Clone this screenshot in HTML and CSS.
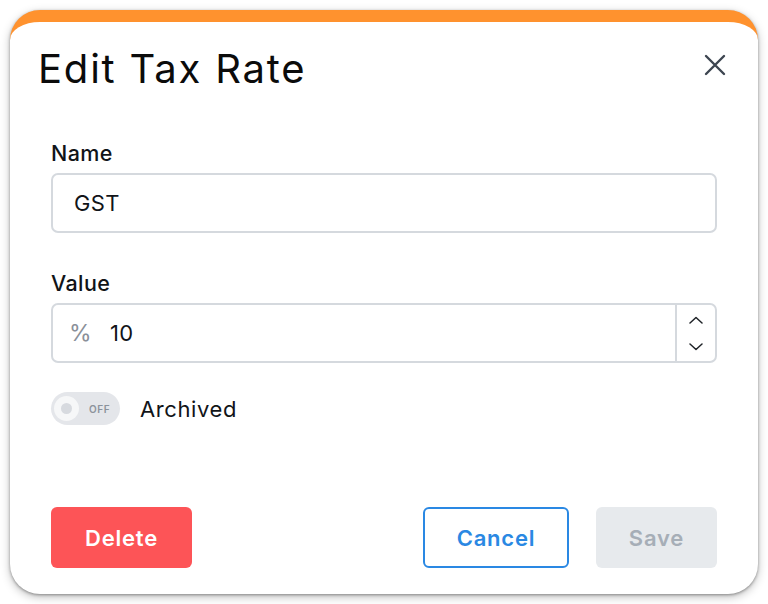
FILE: index.html
```html
<!DOCTYPE html>
<html lang="en">
<head>
<meta charset="utf-8">
<title>Edit Tax Rate</title>
<link rel="stylesheet" href="styles.css">
</head>
<body>
<div class="modal">
  <div class="modal-header">
    <h1 class="modal-title">Edit Tax Rate</h1>
    <button class="close-btn" aria-label="Close">
      <svg width="22" height="22" viewBox="0 0 22 22"><path d="M2 2 L20 20 M20 2 L2 20" stroke="#3d4550" stroke-width="2.4" stroke-linecap="round" fill="none"/></svg>
    </button>
  </div>
  <div class="modal-body">
    <label class="field-label">Name</label>
    <div class="input">
      <span class="input-text">GST</span>
    </div>
    <label class="field-label second">Value</label>
    <div class="input number">
      <span class="prefix">%</span>
      <span class="input-text">10</span>
      <div class="spinner">
        <svg width="14" height="8" viewBox="0 0 14 8"><path d="M1 7 L7 1.5 L13 7" stroke="#1f2328" stroke-width="1.5" fill="none" stroke-linecap="round" stroke-linejoin="round"/></svg>
        <svg width="14" height="8" viewBox="0 0 14 8"><path d="M1 1 L7 6.5 L13 1" stroke="#1f2328" stroke-width="1.5" fill="none" stroke-linecap="round" stroke-linejoin="round"/></svg>
      </div>
    </div>
    <div class="toggle-row">
      <div class="toggle">
        <span class="knob"><span class="dot"></span></span>
        <span class="toggle-text">OFF</span>
      </div>
      <span class="toggle-label">Archived</span>
    </div>
  </div>
  <div class="modal-footer">
    <button class="btn btn-delete">Delete</button>
    <div class="footer-right">
      <button class="btn btn-cancel">Cancel</button>
      <button class="btn btn-save">Save</button>
    </div>
  </div>
</div>
</body>
</html>
```
FILE: styles.css
```css
* { box-sizing: border-box; }
html, body { margin: 0; padding: 0; background: #ffffff; }
body {
  padding: 10px;
  font-family: Inter, "Noto Sans", sans-serif;
  color: #111418;
}
.modal {
  width: 748px;
  height: 584px;
  background: #ffffff;
  border-top: 12px solid #ff922e;
  border-radius: 30px;
  box-shadow: 0 1px 3px rgba(0,0,0,0.35), 0 3px 10px rgba(0,0,0,0.25);
  display: flex;
  flex-direction: column;
}
.modal-header {
  display: flex;
  justify-content: space-between;
  align-items: flex-start;
  padding: 24px 32px 0 28px;
}
.modal-title {
  margin: 0;
  font-family: Inter, sans-serif;
  font-weight: 400;
  font-size: 40px;
  line-height: 46px;
  letter-spacing: 1.8px;
  color: #0b0b0b;
}
.close-btn {
  border: 0;
  background: none;
  padding: 0;
  margin-top: 8px;
  width: 22px;
  height: 22px;
  display: flex;
}
.modal-body {
  padding: 48px 41px 0 41px;
  display: flex;
  flex-direction: column;
}
.field-label {
  font-size: 21.5px;
  font-weight: 500;
  line-height: 26px;
  letter-spacing: 0.4px;
  color: #111418;
  margin-bottom: 7px;
}
.field-label.second { margin-top: 37px; }
.input {
  height: 60px;
  border: 2px solid #d5d9de;
  border-radius: 7px;
  display: flex;
  align-items: center;
  padding-left: 21px;
}
.input-text {
  font-size: 22px;
  letter-spacing: 0.3px;
  color: #111418;
}
.input.number { padding-left: 16px; }
.prefix {
  font-size: 23px;
  color: #8a9099;
  width: 41px;
}
.input.number .input-text { flex: 1; }
.spinner {
  width: 40px;
  height: 100%;
  border-left: 2px solid #d5d9de;
  display: flex;
  flex-direction: column;
  align-items: center;
  justify-content: space-between;
  padding: 11px 0 10px;
}
.toggle-row {
  display: flex;
  align-items: center;
  margin-top: 29px;
  gap: 20px;
}
.toggle {
  width: 69px;
  height: 33px;
  border-radius: 17px;
  background: #e4e6ea;
  display: flex;
  align-items: center;
  padding-left: 3px;
}
.knob {
  width: 25px;
  height: 25px;
  border-radius: 50%;
  background: #f6f7f8;
  display: flex;
  align-items: center;
  justify-content: center;
}
.dot {
  width: 11px;
  height: 11px;
  border-radius: 50%;
  background: #d7dadf;
}
.toggle-text {
  font-size: 10px;
  font-weight: 600;
  letter-spacing: 0.6px;
  color: #8c939c;
  margin-left: 10px;
}
.toggle-label {
  font-size: 22px;
  letter-spacing: 0.6px;
  color: #111418;
}
.modal-footer {
  margin-top: auto;
  display: flex;
  justify-content: space-between;
  padding: 0 41px 26px 41px;
}
.footer-right {
  display: flex;
  gap: 27px;
}
.btn {
  height: 61px;
  border-radius: 6px;
  font-family: Inter, sans-serif;
  font-size: 22px;
  font-weight: 600;
  letter-spacing: 0.8px;
  border: 0;
  padding: 0;
}
.btn-delete {
  width: 141px;
  background: #fd5457;
  color: #ffffff;
}
.btn-cancel {
  width: 146px;
  background: #ffffff;
  border: 2px solid #2a88e3;
  color: #2a88e3;
}
.btn-save {
  width: 121px;
  background: #e7eaed;
  color: #a6aeb7;
}
```
